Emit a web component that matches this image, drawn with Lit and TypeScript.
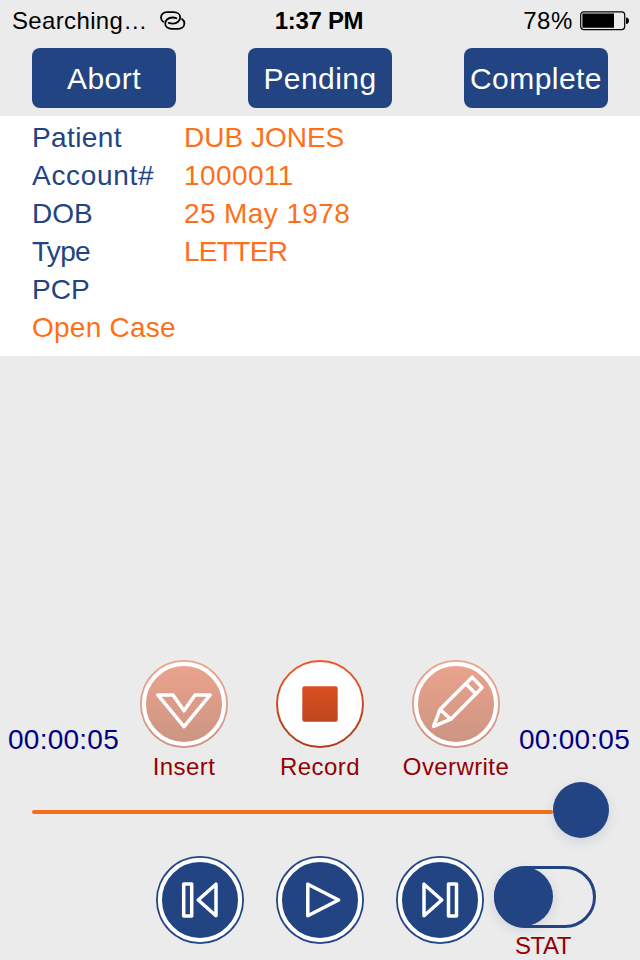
import { LitElement, html, svg, css, nothing } from "lit";
import { customElement, property } from "lit/decorators.js";

const ICONS = {
  insert: svg`<path d="M17.8 34.9H33L44 50.8 55 34.9H70.2L44 66.6Z"/>`,
  overwrite: svg`<path d="M21.6 66.4 28 49.4 60.2 17.2 70.2 27.6 38.8 59.2ZM28 49.4 38.8 59.2M53.6 23.6 64 34"/>`,
  previous: svg`<path d="M27.7 28h8v32h-8ZM60 28.2v31.6L42.2 44Z"/>`,
  play: svg`<path d="M31.8 28.2v31.6L62.6 44Z"/>`,
  next: svg`<path d="M28 28.2v31.6L45.8 44ZM52.5 28h8v32h-8Z"/>`,
};

@customElement("round-button")
class RoundButton extends LitElement {
  @property() icon = "";
  @property() tone = "blue";

  static styles = css`
    :host { display: block; width: 88px; height: 88px; }
    svg { display: block; }
    .glyph { fill: none; stroke: #fff; stroke-width: 3.5; stroke-linejoin: round; stroke-linecap: round; }
  `;

  render() {
    if (this.tone === "record") {
      return html`<svg width="88" height="88" viewBox="0 0 88 88">
        <defs>
          <linearGradient id="edge" x1="0" y1="0" x2="0" y2="1"><stop stop-color="#ee5a2b"/><stop offset="1" stop-color="#a83c1b"/></linearGradient>
          <linearGradient id="stop" x1="0" y1="0" x2="0" y2="1"><stop stop-color="#d95022"/><stop offset="1" stop-color="#bf451d"/></linearGradient>
        </defs>
        <circle cx="44" cy="44" r="43" fill="#fff" stroke="url(#edge)" stroke-width="2"/>
        <rect x="26.3" y="26.3" width="35.4" height="35.4" rx="2.2" fill="url(#stop)"/>
      </svg>`;
    }
    const soft = this.tone === "salmon";
    return html`<svg width="88" height="88" viewBox="0 0 88 88">
      <defs><linearGradient id="face" x1="0" y1="0" x2="0" y2="1"><stop stop-color="#eca38d"/><stop offset="1" stop-color="#ca9482"/></linearGradient></defs>
      <circle cx="44" cy="44" r="44" fill=${soft ? "url(#face)" : "#224482"}/>
      <circle cx="44" cy="44" r="40.1" fill="none" stroke="#fff" stroke-width="4.2"/>
      <g class="glyph">${ICONS[this.icon as keyof typeof ICONS] ?? nothing}</g>
    </svg>`;
  }
}

@customElement("app-root")
class AppRoot extends LitElement {
  static styles = css`
    :host {
      display: flex; flex-direction: column; box-sizing: border-box;
      width: 640px; height: 960px; overflow: hidden; background: #ebebeb;
      font-family: "Liberation Sans", Arial, sans-serif; white-space: nowrap;
    }
    svg { display: block; }
    .status { display: grid; grid-template-columns: 1fr auto 1fr; height: 40px; align-items: center; padding: 1px 11px 0 12px; box-sizing: border-box; font-size: 24px; color: #000; }
    .carrier { display: flex; align-items: center; gap: 12px; letter-spacing: .35px; }
    .time { font-weight: bold; letter-spacing: -.3px; padding-right: 3px; }
    .power { display: flex; justify-content: flex-end; align-items: center; gap: 7px; letter-spacing: .6px; }
    .actions { display: flex; justify-content: space-between; height: 76px; padding: 8px 32px; box-sizing: border-box; }
    .action { width: 144px; height: 60px; border-radius: 8px; background: #224482; color: #fff; font-size: 30px; line-height: 62px; text-align: center; letter-spacing: .45px; }
    .details { display: grid; grid-template-columns: 152px 1fr; grid-auto-rows: 38px; align-content: start; height: 240px; box-sizing: border-box; padding: 3px 32px 0; background: #fff; color: #224482; font-size: 28px; line-height: 38px; letter-spacing: .4px; }
    .value { color: #fe6f18; }
    .caps { letter-spacing: 0; }
    .tight { letter-spacing: -.7px; }
    .loose { letter-spacing: .7px; }
    .case { color: #fe6f18; grid-column: 1 / -1; letter-spacing: .25px; }
    .recorder { margin-top: 304px; display: grid; grid-template-columns: 116px 136px 136px 136px 116px; height: 122px; }
    .timer { color: #000084; font-size: 28px; line-height: 32px; letter-spacing: .25px; padding-top: 64px; padding-left: 8px; margin-right: -10px; }
    .timer.total { margin-left: -13px; margin-right: 0; }
    .tool { display: flex; flex-direction: column; align-items: center; color: #950000; font-size: 24px; line-height: 28px; letter-spacing: .4px; gap: 5px; }
    .slider { display: flex; align-items: center; height: 56px; padding: 0 31px 0 32px; }
    .track { flex: 1; height: 4px; border-radius: 2px; background: #f56d18; margin-top: 4px; }
    .thumb { width: 56px; height: 56px; border-radius: 50%; background: #224482; box-shadow: 0 4px 12px rgba(34,68,130,.14); }
    .transport { display: flex; gap: 32px; padding: 18px 0 0 156px; }
    .stat { margin: 10px 0 0 -22px; width: 102px; text-align: center; color: #950000; font-size: 24px; line-height: 28px; }
    .switch { width: 102px; height: 62px; border: 3px solid #224482; border-radius: 31px; box-sizing: border-box; margin-bottom: 4px; }
    .knob { width: 59px; height: 59px; margin: -2px 0 0 -3px; border-radius: 50%; background: #224482; box-shadow: 0 4px 12px rgba(34,68,130,.14); }
    .stat-label { letter-spacing: -.5px; padding-right: 4px; }
  `;

  private rows = [
    { label: "Patient", value: "DUB JONES", labelFit: "", valueFit: "caps" },
    { label: "Account#", value: "1000011", labelFit: "loose", valueFit: "" },
    { label: "DOB", value: "25 May 1978", labelFit: "caps", valueFit: "" },
    { label: "Type", value: "LETTER", labelFit: "tight", valueFit: "tight" },
    { label: "PCP", value: "", labelFit: "caps", valueFit: "" },
  ];

  render() {
    return html`
      <div class="status">
        <div class="carrier"><span>Searching…</span>
          <svg width="26" height="20" viewBox="0 0 26 20" fill="none" stroke="#000" stroke-width="1.8" stroke-linecap="round">
            <path d="M3.2 10.8C1.8 9.8 1 8.3 1 6.4 1 3.2 3.6 1.2 7 1.2h6.6c3.8 0 6.6 2.1 6.6 5.1 0 3.6-3.2 6.3-7.2 6.3-1.8 0-3-.2-4.3-.7"/>
            <path d="M16.4 7.2c-1.1-.5-2.4-.7-4-.7-4 0-7.2 2.6-7.2 6.1 0 3.1 2.8 5.2 6.6 5.2h6.4c3.4 0 6.2-2.1 6.2-5.2 0-1.9-.8-3.5-2.4-4.6"/>
          </svg>
        </div>
        <div class="time">1:37 PM</div>
        <div class="power"><span>78%</span>
          <svg width="49" height="20" viewBox="0 0 49 20">
            <rect x=".7" y=".8" width="44" height="17.8" rx="3" fill="none" stroke="#000" stroke-width="1.2"/>
            <path d="M2.4 2.6h31.6v14.2H2.4zM46 6.4c2 0 3 1.4 3 3.3s-1 3.3-3 3.3z"/>
          </svg>
        </div>
      </div>
      <div class="actions">
        ${["Abort", "Pending", "Complete"].map((t) => html`<div class="action">${t}</div>`)}
      </div>
      <div class="details">
        ${this.rows.map((r) => html`<span class=${r.labelFit}>${r.label}</span><span class="value ${r.valueFit}">${r.value}</span>`)}
        <span class="case">Open Case</span>
      </div>
      <div class="recorder">
        <div class="timer">00:00:05</div>
        <div class="tool"><round-button tone="salmon" icon="insert"></round-button><span>Insert</span></div>
        <div class="tool"><round-button tone="record"></round-button><span>Record</span></div>
        <div class="tool"><round-button tone="salmon" icon="overwrite"></round-button><span>Overwrite</span></div>
        <div class="timer total">00:00:05</div>
      </div>
      <div class="slider"><div class="track"></div><div class="thumb"></div></div>
      <div class="transport">
        <round-button icon="previous"></round-button>
        <round-button icon="play"></round-button>
        <round-button icon="next"></round-button>
        <div class="stat"><div class="switch"><div class="knob"></div></div><div class="stat-label">STAT</div></div>
      </div>
    `;
  }
}
